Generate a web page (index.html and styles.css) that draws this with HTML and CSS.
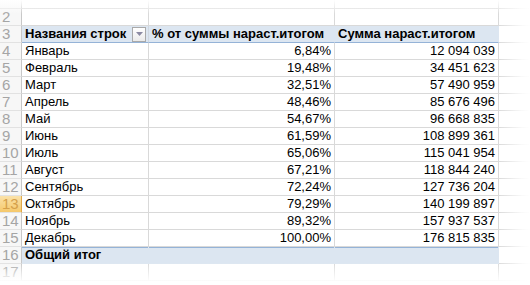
FILE: index.html
```html
<!DOCTYPE html>
<html>
<head>
<meta charset="utf-8">
<link rel="stylesheet" href="styles.css">
</head>
<body>
<div class="wrap">
  <div class="sheet">
    <div class="rh r1"></div><div class="c r1"></div><div class="c r1"></div><div class="c r1"></div><div class="c r1 last"></div>
    <div class="rh">2</div><div class="c"></div><div class="c"></div><div class="c"></div><div class="c last"></div>
    <div class="rh">3</div>
    <div class="c hd hdA"><span>Названия строк</span><span class="dd"><svg width="7" height="4" viewBox="0 0 7 4"><path d="M0 0H7L3.5 4Z" fill="#8b8aa3"/></svg></span></div>
    <div class="c hd">% от суммы нараст.итогом</div>
    <div class="c hd">Сумма нараст.итогом</div>
    <div class="c last"></div>

    <div class="rh">4</div><div class="c">Январь</div><div class="c num">6,84%</div><div class="c num">12 094 039</div><div class="c last"></div>
    <div class="rh">5</div><div class="c">Февраль</div><div class="c num">19,48%</div><div class="c num">34 451 623</div><div class="c last"></div>
    <div class="rh">6</div><div class="c">Март</div><div class="c num">32,51%</div><div class="c num">57 490 959</div><div class="c last"></div>
    <div class="rh">7</div><div class="c">Апрель</div><div class="c num">48,46%</div><div class="c num">85 676 496</div><div class="c last"></div>
    <div class="rh">8</div><div class="c">Май</div><div class="c num">54,67%</div><div class="c num">96 668 835</div><div class="c last"></div>
    <div class="rh">9</div><div class="c">Июнь</div><div class="c num">61,59%</div><div class="c num">108 899 361</div><div class="c last"></div>
    <div class="rh">10</div><div class="c">Июль</div><div class="c num">65,06%</div><div class="c num">115 041 954</div><div class="c last"></div>
    <div class="rh">11</div><div class="c">Август</div><div class="c num">67,21%</div><div class="c num">118 844 240</div><div class="c last"></div>
    <div class="rh">12</div><div class="c">Сентябрь</div><div class="c num">72,24%</div><div class="c num">127 736 204</div><div class="c last"></div>
    <div class="rh sel">13</div><div class="c">Октябрь</div><div class="c num">79,29%</div><div class="c num">140 199 897</div><div class="c last"></div>
    <div class="rh">14</div><div class="c">Ноябрь</div><div class="c num">89,32%</div><div class="c num">157 937 537</div><div class="c last"></div>
    <div class="rh">15</div><div class="c">Декабрь</div><div class="c num">100,00%</div><div class="c num">176 815 835</div><div class="c last"></div>
    <div class="rh">16</div><div class="c tot">Общий итог</div><div class="c tot"></div><div class="c tot"></div><div class="c last"></div>
    <div class="rh">17</div><div class="c"></div><div class="c"></div><div class="c"></div><div class="c last"></div>
  </div>
  <div class="fade"></div>
</div>
</body>
</html>
```
FILE: styles.css
```css
html, body {
  margin: 0;
  padding: 0;
  background: #fff;
}
.wrap {
  position: relative;
  width: 530px;
  height: 285px;
  overflow: hidden;
}
.sheet {
  display: grid;
  grid-template-columns: 22px 127px 186px 164px 40px;
  grid-template-rows: 9px;
  grid-auto-rows: 17px;
  font-family: "Liberation Sans", Arial, sans-serif;
  font-size: 13px;
  color: #000;
}
.sheet > div {
  box-sizing: border-box;
  border-right: 1px solid #d9d9d9;
  border-bottom: 1px solid #d9d9d9;
  white-space: nowrap;
  overflow: hidden;
  line-height: 16px;
}
.rh {
  background: #f7f7f7;
  color: #a5a5a5;
  font-size: 15px;
  text-align: left;
  padding-left: 2px;
  border-right-color: #c8c8c8 !important;
  border-bottom-color: #e2e2e2 !important;
}
.rh.sel {
  background: linear-gradient(#fbe2a9, #f5c86b);
  color: #d5a04a;
  border-right-color: #e0a84a !important;
}
.c {
  padding-left: 3px;
}
.num {
  text-align: right;
  padding: 0 3px 0 0;
}
.hd {
  background: #dce6f1;
  font-weight: bold;
  border-bottom-color: #95b3d7 !important;
  border-right-color: #dce6f1 !important;
}
.hdA {
  display: flex;
  align-items: center;
  justify-content: space-between;
  padding-right: 2px;
  border-right-color: #d0d7e0 !important;
}
.dd {
  width: 12px;
  height: 13px;
  border: 1px solid #a9a9a9;
  background: linear-gradient(#ffffff, #eaeaea);
  display: flex;
  align-items: center;
  justify-content: center;
}
.tot {
  background: #dce6f1;
  font-weight: bold;
  border-right-color: #dce6f1 !important;
  border-bottom-color: #dce6f1 !important;
  box-shadow: inset 0 1px 0 #95b3d7;
}
.fade {
  position: absolute;
  inset: 0;
  pointer-events: none;
  background:
    linear-gradient(to bottom, #fff 0px, rgba(255,255,255,0.6) 6px, rgba(255,255,255,0) 14px),
    linear-gradient(to top, #fff 0px, rgba(255,255,255,0.85) 6px, rgba(255,255,255,0) 22px),
    linear-gradient(to left, #fff 0px, rgba(255,255,255,0.85) 8px, rgba(255,255,255,0) 32px);
}
```
